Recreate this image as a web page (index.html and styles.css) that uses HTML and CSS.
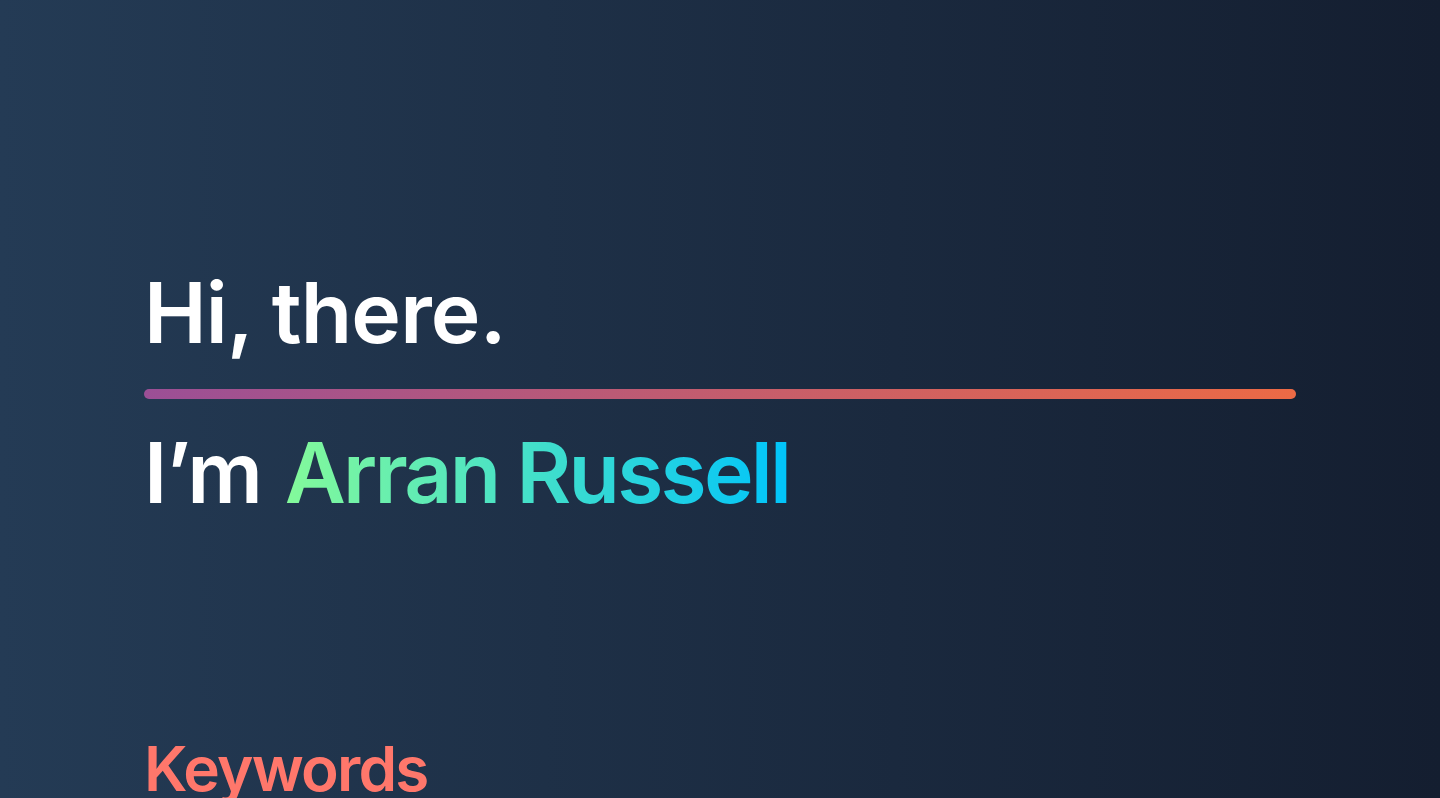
FILE: index.html
```html
<!DOCTYPE html>
<html lang="en">
<head>
<meta charset="utf-8">
<title>Arran Russell</title>
<link rel="stylesheet" href="styles.css">
</head>
<body>
<main class="page">
  <section class="hero">
    <h1 class="greeting">Hi, there.</h1>
    <div class="divider"></div>
    <h2 class="intro">I’m <span class="name">Arran Russell</span></h2>
  </section>
  <section class="keywords">
    <h3 class="keywords-title">Keywords</h3>
  </section>
</main>
</body>
</html>
```

FILE: styles.css
```css
html, body {
  margin: 0;
  padding: 0;
  height: 100%;
  overflow: hidden;
}
body {
  background: linear-gradient(to right, #243b55, #141e30);
  font-family: "Inter", "Noto Sans", sans-serif;
  color: #ffffff;
}
.page {
  padding: 0 144px;
}
.hero {
  padding-top: 263px;
  display: flex;
  flex-direction: column;
}
.greeting {
  margin: 0;
  font-size: 84px;
  font-weight: 600;
  line-height: 100px;
  letter-spacing: -0.8px;
}
.divider {
  margin-top: 26px;
  height: 10px;
  border-radius: 5px;
  background: linear-gradient(to right, #9b4f96, #ec6a45);
}
.intro {
  margin: 24px 0 0;
  font-size: 84px;
  font-weight: 600;
  line-height: 100px;
  letter-spacing: -1.2px;
  word-spacing: 3px;
}
.name {
  letter-spacing: -2.8px;
  word-spacing: 0;
  background: linear-gradient(to right, #84fa9a, #00c4fb);
  -webkit-background-clip: text;
  background-clip: text;
  color: transparent;
}
.keywords {
  padding-top: 206px;
}
.keywords-title {
  margin: 0;
  font-size: 62px;
  font-weight: 600;
  color: #ff776b;
  line-height: 80px;
  letter-spacing: -1.8px;
}
```
